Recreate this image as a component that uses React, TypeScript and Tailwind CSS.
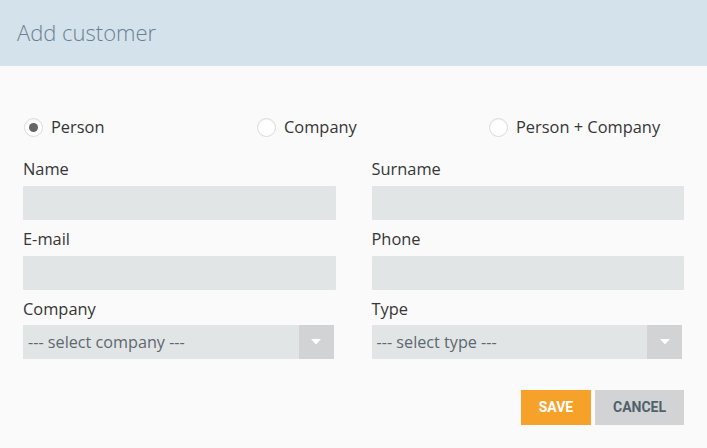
import React from "react";

function Radio({ label, checked }: { label: string; checked?: boolean }) {
  return (
    <label className="flex items-center gap-[8px] h-[20px]">
      <span className="w-[19px] h-[19px] rounded-full bg-white border border-[#dcdcdc] flex items-center justify-center shadow-[inset_0_1px_1px_rgba(0,0,0,0.05)]">
        {checked && <span className="w-[9px] h-[9px] rounded-full bg-[#666666]" />}
      </span>
      <span className="text-[16.4px] leading-[20px] text-[#363636]">{label}</span>
    </label>
  );
}

function Field({ label }: { label: string }) {
  return (
    <div className="flex flex-col">
      <div className="text-[16.4px] leading-[18px] text-[#363636] mb-[8px]">{label}</div>
      <div className="h-[34px] bg-[#e2e5e6] rounded-[1px]" />
    </div>
  );
}

function Select({ label, placeholder }: { label: string; placeholder: string }) {
  return (
    <div className="flex flex-col">
      <div className="text-[16.4px] leading-[18px] text-[#363636] mb-[7px]">{label}</div>
      <div className="h-[34px] w-[calc(100%-2px)] bg-[#e2e5e6] flex items-center">
        <span className="flex-1 pl-[5px] text-[16.2px] text-[#5d6870]">{placeholder}</span>
        <span className="w-[35px] h-full bg-[#d1d3d4] flex items-center justify-center">
          <svg width="10" height="6" viewBox="0 0 10 6">
            <path d="M0 0 L10 0 L5 5.5 Z" fill="#ffffff" />
          </svg>
        </span>
      </div>
    </div>
  );
}

export default function App() {
  return (
    <div className="w-[707px] h-[448px] bg-[#fafafa] font-['Open_Sans',sans-serif] overflow-hidden">
      <div className="h-[66px] bg-[#d4e2eb] flex items-center px-[17px]">
        <h1 className="text-[22px] font-light text-[#6a8192] leading-none pb-[2px]">Add customer</h1>
      </div>
      <div className="px-[23px] pt-[51px]">
        <div className="grid grid-cols-[233px_232px_1fr] pl-[1px]">
          <Radio label="Person" checked />
          <Radio label="Company" />
          <Radio label="Person + Company" />
        </div>
        <div className="grid grid-cols-2 gap-x-[36px] gap-y-[10px] mt-[23px]">
          <Field label="Name" />
          <Field label="Surname" />
          <Field label="E-mail" />
          <Field label="Phone" />
          <Select label="Company" placeholder="--- select company ---" />
          <Select label="Type" placeholder="--- select type ---" />
        </div>
        <div className="flex justify-end gap-[4px] mt-[31px]">
          <button className="w-[70px] h-[35px] bg-[#f6a12a] text-white font-['Roboto',sans-serif] font-bold text-[14px]">
            SAVE
          </button>
          <button className="w-[89px] h-[35px] bg-[#d1d3d4] text-[#51616c] font-['Roboto',sans-serif] font-bold text-[14px]">
            CANCEL
          </button>
        </div>
      </div>
    </div>
  );
}
